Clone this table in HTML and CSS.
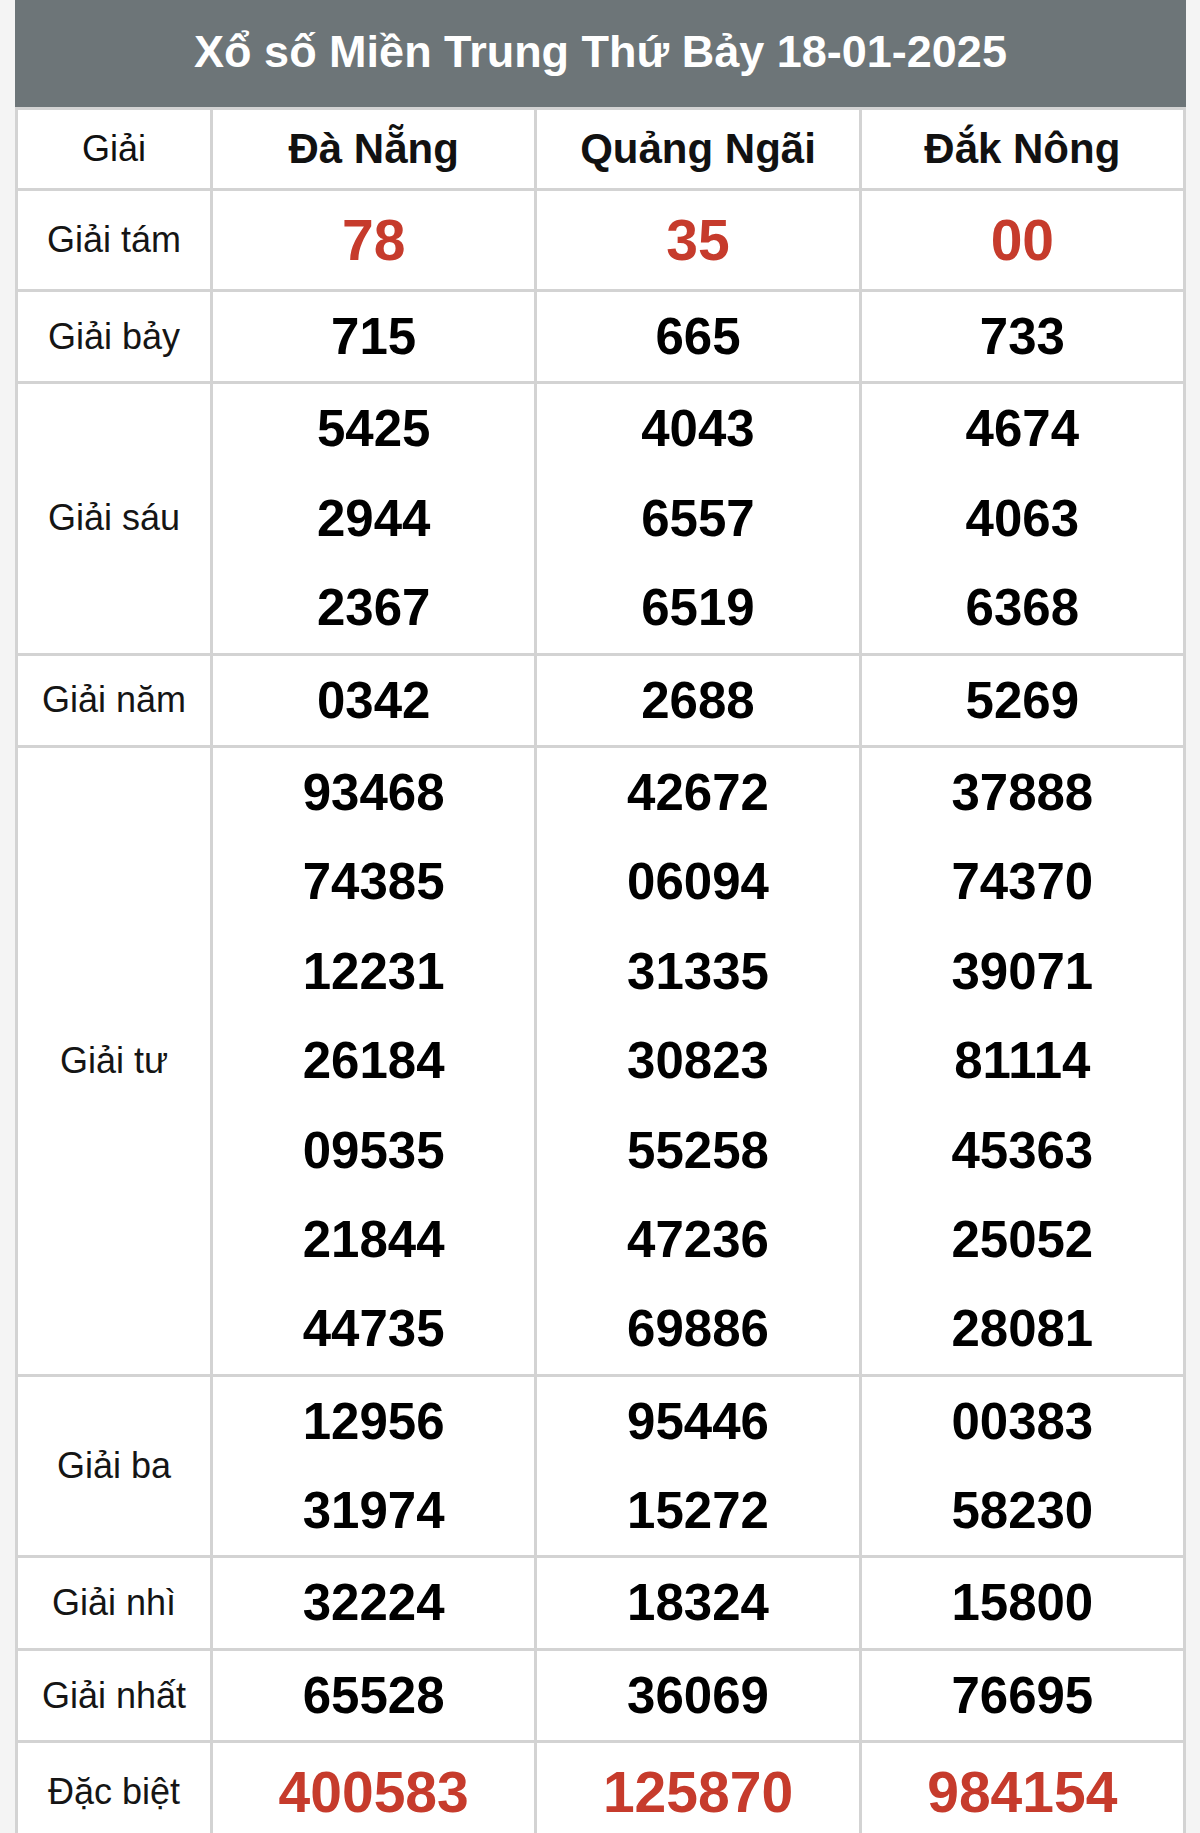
FILE: index.html
```html
<!DOCTYPE html>
<html lang="vi">
<head>
<meta charset="utf-8">
<title>Xổ số Miền Trung Thứ Bảy 18-01-2025</title>
<link rel="stylesheet" href="styles.css">
</head>
<body>
<div class="page">
  <div class="title">Xổ số Miền Trung Thứ Bảy 18-01-2025</div>
  <table class="kq">
    <colgroup>
      <col class="c-label">
      <col class="c-prov">
      <col class="c-prov">
      <col class="c-prov">
    </colgroup>
    <thead>
      <tr class="head">
        <th class="lbl">Giải</th>
        <th>Đà Nẵng</th>
        <th>Quảng Ngãi</th>
        <th>Đắk Nông</th>
      </tr>
    </thead>
    <tbody>
      <tr class="big">
        <td class="lbl">Giải tám</td>
        <td><div class="n red">78</div></td>
        <td><div class="n red">35</div></td>
        <td><div class="n red">00</div></td>
      </tr>
      <tr>
        <td class="lbl">Giải bảy</td>
        <td><div class="n">715</div></td>
        <td><div class="n">665</div></td>
        <td><div class="n">733</div></td>
      </tr>
      <tr>
        <td class="lbl">Giải sáu</td>
        <td><div class="n">5425</div><div class="n">2944</div><div class="n">2367</div></td>
        <td><div class="n">4043</div><div class="n">6557</div><div class="n">6519</div></td>
        <td><div class="n">4674</div><div class="n">4063</div><div class="n">6368</div></td>
      </tr>
      <tr>
        <td class="lbl">Giải năm</td>
        <td><div class="n">0342</div></td>
        <td><div class="n">2688</div></td>
        <td><div class="n">5269</div></td>
      </tr>
      <tr>
        <td class="lbl">Giải tư</td>
        <td><div class="n">93468</div><div class="n">74385</div><div class="n">12231</div><div class="n">26184</div><div class="n">09535</div><div class="n">21844</div><div class="n">44735</div></td>
        <td><div class="n">42672</div><div class="n">06094</div><div class="n">31335</div><div class="n">30823</div><div class="n">55258</div><div class="n">47236</div><div class="n">69886</div></td>
        <td><div class="n">37888</div><div class="n">74370</div><div class="n">39071</div><div class="n">81114</div><div class="n">45363</div><div class="n">25052</div><div class="n">28081</div></td>
      </tr>
      <tr>
        <td class="lbl">Giải ba</td>
        <td><div class="n">12956</div><div class="n">31974</div></td>
        <td><div class="n">95446</div><div class="n">15272</div></td>
        <td><div class="n">00383</div><div class="n">58230</div></td>
      </tr>
      <tr>
        <td class="lbl">Giải nhì</td>
        <td><div class="n">32224</div></td>
        <td><div class="n">18324</div></td>
        <td><div class="n">15800</div></td>
      </tr>
      <tr>
        <td class="lbl">Giải nhất</td>
        <td><div class="n">65528</div></td>
        <td><div class="n">36069</div></td>
        <td><div class="n">76695</div></td>
      </tr>
      <tr class="big">
        <td class="lbl">Đặc biệt</td>
        <td><div class="n red">400583</div></td>
        <td><div class="n red">125870</div></td>
        <td><div class="n red">984154</div></td>
      </tr>
    </tbody>
  </table>
</div>
</body>
</html>
```

FILE: styles.css
```css
html, body {
  margin: 0;
  padding: 0;
  background: #f4f4f4;
}

body {
  font-family: "Liberation Sans", Arial, Helvetica, sans-serif;
  color: #111;
}

.page {
  margin: 0 14px 0 15px;
  background: #fff;
}

.title {
  height: 107px;
  line-height: 104px;
  background: #6d7578;
  color: #fff;
  font-weight: bold;
  font-size: 45px;
  text-align: center;
}

.kq {
  width: 100%;
  border-collapse: collapse;
  table-layout: fixed;
  background: #fff;
}

.c-label {
  width: 195px;
}

.kq th,
.kq td {
  border: 3px solid #d3d3d3;
  padding: 0;
  text-align: center;
  vertical-align: middle;
}

.head th {
  height: 78px;
  font-size: 42px;
  font-weight: bold;
  color: #111;
}

.head th.lbl {
  font-weight: normal;
  font-size: 36px;
}

.lbl {
  font-size: 36px;
  color: #151515;
}

.n {
  height: 89.4px;
  line-height: 89.4px;
  font-size: 51px;
  font-weight: bold;
  color: #000;
}

.big .n {
  height: 98px;
  line-height: 98px;
}

.n.red {
  color: #c63b2c;
  font-size: 57px;
}
```
